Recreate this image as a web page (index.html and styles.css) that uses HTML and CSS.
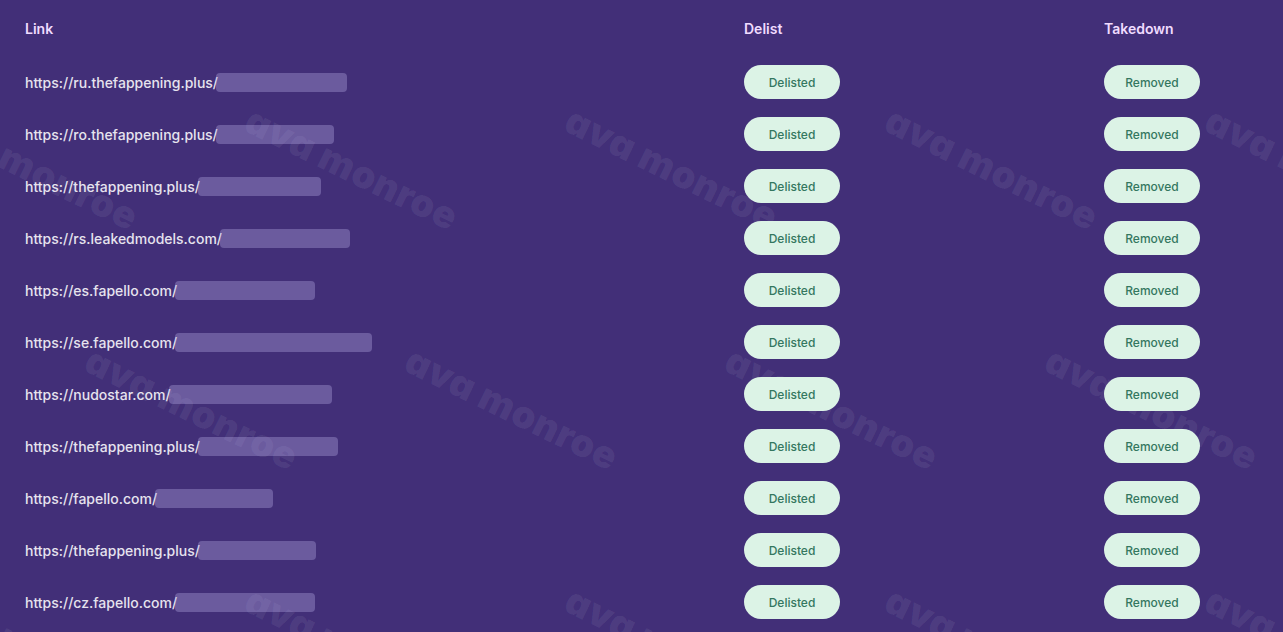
FILE: index.html
```html
<!DOCTYPE html>
<html lang="en">
<head>
<meta charset="utf-8">
<title>Removal report</title>
<link rel="stylesheet" href="styles.css">
</head>
<body>
<div class="page">
  <div class="wm-layer" aria-hidden="true">
    <div class="wm-row wm-a"><span class="wm">ava monroe</span><span class="wm">ava monroe</span><span class="wm">ava monroe</span><span class="wm">ava monroe</span><span class="wm">ava monroe</span></div>
    <div class="wm-row wm-b"><span class="wm">ava monroe</span><span class="wm">ava monroe</span><span class="wm">ava monroe</span><span class="wm">ava monroe</span><span class="wm">ava monroe</span></div>
    <div class="wm-row wm-a"><span class="wm">ava monroe</span><span class="wm">ava monroe</span><span class="wm">ava monroe</span><span class="wm">ava monroe</span><span class="wm">ava monroe</span></div>
  </div>

  <div class="table">
    <div class="row head">
      <div class="cell">Link</div>
      <div class="cell">Delist</div>
      <div class="cell">Takedown</div>
    </div>

    <div class="row">
      <div class="cell link">https://ru.thefappening.plus/<span class="mask" style="width:131px"></span></div>
      <div class="cell"><span class="pill">Delisted</span></div>
      <div class="cell"><span class="pill">Removed</span></div>
    </div>
    <div class="row">
      <div class="cell link">https://ro.thefappening.plus/<span class="mask" style="width:118px"></span></div>
      <div class="cell"><span class="pill">Delisted</span></div>
      <div class="cell"><span class="pill">Removed</span></div>
    </div>
    <div class="row">
      <div class="cell link">https://thefappening.plus/<span class="mask" style="width:123px"></span></div>
      <div class="cell"><span class="pill">Delisted</span></div>
      <div class="cell"><span class="pill">Removed</span></div>
    </div>
    <div class="row">
      <div class="cell link">https://rs.leakedmodels.com/<span class="mask" style="width:130px"></span></div>
      <div class="cell"><span class="pill">Delisted</span></div>
      <div class="cell"><span class="pill">Removed</span></div>
    </div>
    <div class="row">
      <div class="cell link">https://es.fapello.com/<span class="mask" style="width:140px"></span></div>
      <div class="cell"><span class="pill">Delisted</span></div>
      <div class="cell"><span class="pill">Removed</span></div>
    </div>
    <div class="row">
      <div class="cell link">https://se.fapello.com/<span class="mask" style="width:197px"></span></div>
      <div class="cell"><span class="pill">Delisted</span></div>
      <div class="cell"><span class="pill">Removed</span></div>
    </div>
    <div class="row">
      <div class="cell link">https://nudostar.com/<span class="mask" style="width:163px"></span></div>
      <div class="cell"><span class="pill">Delisted</span></div>
      <div class="cell"><span class="pill">Removed</span></div>
    </div>
    <div class="row">
      <div class="cell link">https://thefappening.plus/<span class="mask" style="width:140px"></span></div>
      <div class="cell"><span class="pill">Delisted</span></div>
      <div class="cell"><span class="pill">Removed</span></div>
    </div>
    <div class="row">
      <div class="cell link">https://fapello.com/<span class="mask" style="width:118px"></span></div>
      <div class="cell"><span class="pill">Delisted</span></div>
      <div class="cell"><span class="pill">Removed</span></div>
    </div>
    <div class="row">
      <div class="cell link">https://thefappening.plus/<span class="mask" style="width:118px"></span></div>
      <div class="cell"><span class="pill">Delisted</span></div>
      <div class="cell"><span class="pill">Removed</span></div>
    </div>
    <div class="row">
      <div class="cell link">https://cz.fapello.com/<span class="mask" style="width:140px"></span></div>
      <div class="cell"><span class="pill">Delisted</span></div>
      <div class="cell"><span class="pill">Removed</span></div>
    </div>
  </div>
</div>
</body>
</html>
```

FILE: styles.css
```css
html, body {
  margin: 0;
  padding: 0;
  background: #422f78;
  height: 100%;
  overflow: hidden;
}

.page {
  position: relative;
  min-height: 100%;
  font-family: Inter, "Noto Sans", "Liberation Sans", sans-serif;
}

/* watermark */
.wm-layer {
  position: absolute;
  inset: 0;
  overflow: hidden;
  z-index: 0;
  padding-top: 48px;
  pointer-events: none;
}
.wm-row {
  display: flex;
  height: 240px;
  width: 2000px;
}
.wm-row.wm-a { margin-left: -128px; }
.wm-row.wm-b { margin-left: 32px; }
.wm {
  flex: 0 0 320px;
  display: flex;
  align-items: center;
  justify-content: center;
  font-family: Inter, sans-serif;
  font-feature-settings: "cv11" 1;
  font-weight: 900;
  font-size: 38px;
  letter-spacing: 0.5px;
  color: rgba(255, 255, 255, 0.075);
  transform: rotate(26deg);
  white-space: nowrap;
}

/* table */
.table {
  position: relative;
  z-index: 1;
  padding-left: 25px;
}
.row {
  display: grid;
  grid-template-columns: 719px 360px 1fr;
  height: 52px;
  align-items: center;
}
.row.head {
  height: 56px;
  font-size: 14px;
  font-weight: 600;
  color: #f0dcff;
}
.cell {
  display: flex;
  align-items: center;
  white-space: nowrap;
}
.link {
  font-size: 14px;
  font-weight: 500;
  color: #e6e3ee;
}
.mask {
  display: inline-block;
  height: 19px;
  margin-left: -2px;
  border-radius: 4px;
  background: rgba(180, 170, 228, 0.36);
}
.pill {
  display: inline-flex;
  align-items: center;
  justify-content: center;
  width: 96px;
  height: 34px;
  border-radius: 17px;
  background: #dcf3e6;
  color: #34775f;
  font-size: 12px;
  font-weight: 500;
}
```
